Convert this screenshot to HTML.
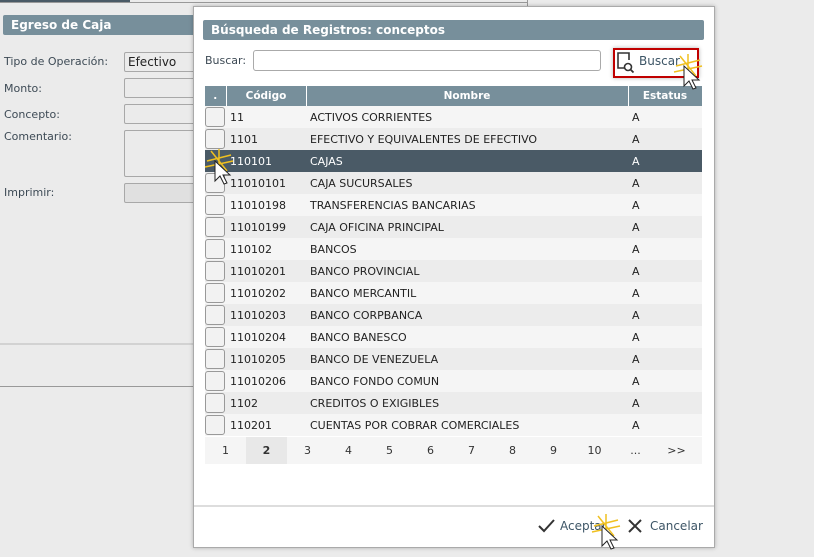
<!DOCTYPE html><html><head><meta charset="utf-8"><style>
*{box-sizing:border-box;margin:0;padding:0}
body{width:814px;height:557px;background:#ebebeb;font-family:"DejaVu Sans","Liberation Sans",sans-serif;font-size:11px;color:#222;position:relative;overflow:hidden}
.a{position:absolute}
.lbl{color:#3d4a55;font-size:11px}
.inp{position:absolute;left:124px;width:80px;height:20px;border:1px solid #a8a8a8;border-radius:2px;background:#ebebeb}
.modal{left:193px;top:6px;width:522px;height:542px;background:#fff;border:1px solid #aaa;box-shadow:0 0 4px rgba(0,0,0,.25)}
table{border-collapse:collapse;position:absolute;left:11px;top:79px;width:497px;table-layout:fixed}
th{background:#778f9b;color:#fff;font-weight:bold;height:20px;font-size:10.5px;border-right:1px solid #fff;text-align:center}
td{height:22px;font-size:11px;padding-left:4px;white-space:nowrap;overflow:hidden}
tr:nth-child(odd) td{background:#ececec}
tr:nth-child(even) td{background:#f5f5f5}
tr.sel td{background:#4a5a66!important;color:#fff}
.cb{display:block;width:20px;height:20px;border:1px solid #999;border-radius:3px;background:#f2f2f2;margin-left:-4px}
.pg{position:absolute;left:11px;top:430px;width:497px;height:27px;background:#f5f5f5;display:flex}
.pg span{width:41px;text-align:center;line-height:27px;font-size:11px;color:#333}
</style></head><body>
<div class="a" style="left:0;top:0;width:130px;height:3px;background:#4a5a66"></div>
<div class="a" style="left:0;top:2px;width:528px;height:1px;background:#999"></div>
<div class="a" style="left:527px;top:0;width:1px;height:6px;background:#999"></div>
<div class="a" style="left:3px;top:15px;width:200px;height:20px;background:#778f9b;border-radius:2px;color:#fff;font-weight:bold;font-size:12px;padding:3px 8px">Egreso de Caja</div>
<div class="a lbl" style="left:4px;top:55px">Tipo de Operación:</div>
<div class="inp" style="top:52px;font-size:12px;padding:2px 3px;color:#222">Efectivo</div>
<div class="a lbl" style="left:4px;top:82px">Monto:</div><div class="inp" style="top:78px"></div>
<div class="a lbl" style="left:4px;top:108px">Concepto:</div><div class="inp" style="top:104px"></div>
<div class="a lbl" style="left:4px;top:130px">Comentario:</div><div class="inp" style="top:130px;height:47px"></div>
<div class="a lbl" style="left:4px;top:186px">Imprimir:</div><div class="inp" style="top:183px;background:#e0e0e0"></div>
<div class="a" style="left:0;top:343px;width:200px;height:2px;background:#d2d2d2"></div>
<div class="a" style="left:0;top:386px;width:200px;height:1px;background:#999"></div>
<div class="a modal">
<div class="a" style="left:9px;top:13px;width:501px;height:20px;background:#778f9b;border-radius:2px;color:#fff;font-weight:bold;font-size:12px;padding:3px 8px">Búsqueda de Registros: conceptos</div>
<div class="a lbl" style="left:11px;top:47px">Buscar:</div>
<div class="a" style="left:59px;top:43px;width:348px;height:21px;border:1px solid #aaa;border-radius:3px"></div>
<div class="a" style="left:419px;top:41px;width:86px;height:30px;border:2px solid #c00000;box-shadow:0 0 4px rgba(0,0,0,.3)"></div>
<svg class="a" style="left:422px;top:44px" width="20" height="24" viewBox="0 0 20 24"><path d="M9 17H2V2h11v7" fill="none" stroke="#333" stroke-width="1.6"/><circle cx="12" cy="16" r="3.5" fill="none" stroke="#333" stroke-width="1.6"/><path d="M14.5 18.5l3 3" stroke="#333" stroke-width="1.8"/></svg>
<div class="a" style="left:445px;top:47px;color:#3d5566;font-size:12px">Buscar</div>
<table><colgroup><col style="width:21px"><col style="width:80px"><col style="width:322px"><col style="width:74px"></colgroup>
<tr><th>.</th><th>Código</th><th>Nombre</th><th>Estatus</th></tr>
<tr><td><i class="cb"></i></td><td>11</td><td>ACTIVOS CORRIENTES</td><td>A</td></tr>
<tr><td><i class="cb"></i></td><td>1101</td><td>EFECTIVO Y EQUIVALENTES DE EFECTIVO</td><td>A</td></tr>
<tr class="sel"><td><i class="cb" style="background:#4a5a66;border-color:#4a5a66"></i></td><td>110101</td><td>CAJAS</td><td>A</td></tr>
<tr><td><i class="cb"></i></td><td>11010101</td><td>CAJA SUCURSALES</td><td>A</td></tr>
<tr><td><i class="cb"></i></td><td>11010198</td><td>TRANSFERENCIAS BANCARIAS</td><td>A</td></tr>
<tr><td><i class="cb"></i></td><td>11010199</td><td>CAJA OFICINA PRINCIPAL</td><td>A</td></tr>
<tr><td><i class="cb"></i></td><td>110102</td><td>BANCOS</td><td>A</td></tr>
<tr><td><i class="cb"></i></td><td>11010201</td><td>BANCO PROVINCIAL</td><td>A</td></tr>
<tr><td><i class="cb"></i></td><td>11010202</td><td>BANCO MERCANTIL</td><td>A</td></tr>
<tr><td><i class="cb"></i></td><td>11010203</td><td>BANCO CORPBANCA</td><td>A</td></tr>
<tr><td><i class="cb"></i></td><td>11010204</td><td>BANCO BANESCO</td><td>A</td></tr>
<tr><td><i class="cb"></i></td><td>11010205</td><td>BANCO DE VENEZUELA</td><td>A</td></tr>
<tr><td><i class="cb"></i></td><td>11010206</td><td>BANCO FONDO COMUN</td><td>A</td></tr>
<tr><td><i class="cb"></i></td><td>1102</td><td>CREDITOS O EXIGIBLES</td><td>A</td></tr>
<tr><td><i class="cb"></i></td><td>110201</td><td>CUENTAS POR COBRAR COMERCIALES</td><td>A</td></tr>
</table>
<div class="pg"><span>1</span><span style="background:#e8e8e8;font-weight:bold">2</span><span>3</span><span>4</span><span>5</span><span>6</span><span>7</span><span>8</span><span>9</span><span>10</span><span>...</span><span>&gt;&gt;</span></div>
<div class="a" style="left:0;top:498px;width:520px;height:2px;background:#ddd"></div>
<svg class="a" style="left:344px;top:511px" width="18" height="16"><path d="M1 8l5 5L16 2" fill="none" stroke="#333" stroke-width="2"/></svg>
<div class="a" style="left:366px;top:512px;color:#3d5566;font-size:12px">Aceptar</div>
<svg class="a" style="left:433px;top:511px" width="16" height="16"><path d="M2 2l12 12M14 2L2 14" stroke="#333" stroke-width="2"/></svg>
<div class="a" style="left:456px;top:512px;color:#3d5566;font-size:12px">Cancelar</div>
</div>
<svg class="a" style="left:672px;top:52px" width="32" height="40"><path d="M4 14L28 8M8 4l16 20M16 2v24M2 20L30 14" stroke="#f0c020" stroke-width="1.5"/><path d="M12 14v20l5-5 4 8 3-1-4-8h7z" fill="#fff" stroke="#222"/></svg>
<svg class="a" style="left:203px;top:147px" width="32" height="40"><path d="M4 14L28 8M8 4l16 20M16 2v24M2 20L30 14" stroke="#f0c020" stroke-width="1.5"/><path d="M12 14v20l5-5 4 8 3-1-4-8h7z" fill="#fff" stroke="#222"/></svg>
<svg class="a" style="left:590px;top:512px" width="32" height="40"><path d="M4 14L28 8M8 4l16 20M16 2v24M2 20L30 14" stroke="#f0c020" stroke-width="1.5"/><path d="M12 14v20l5-5 4 8 3-1-4-8h7z" fill="#fff" stroke="#222"/></svg>
</body></html>
